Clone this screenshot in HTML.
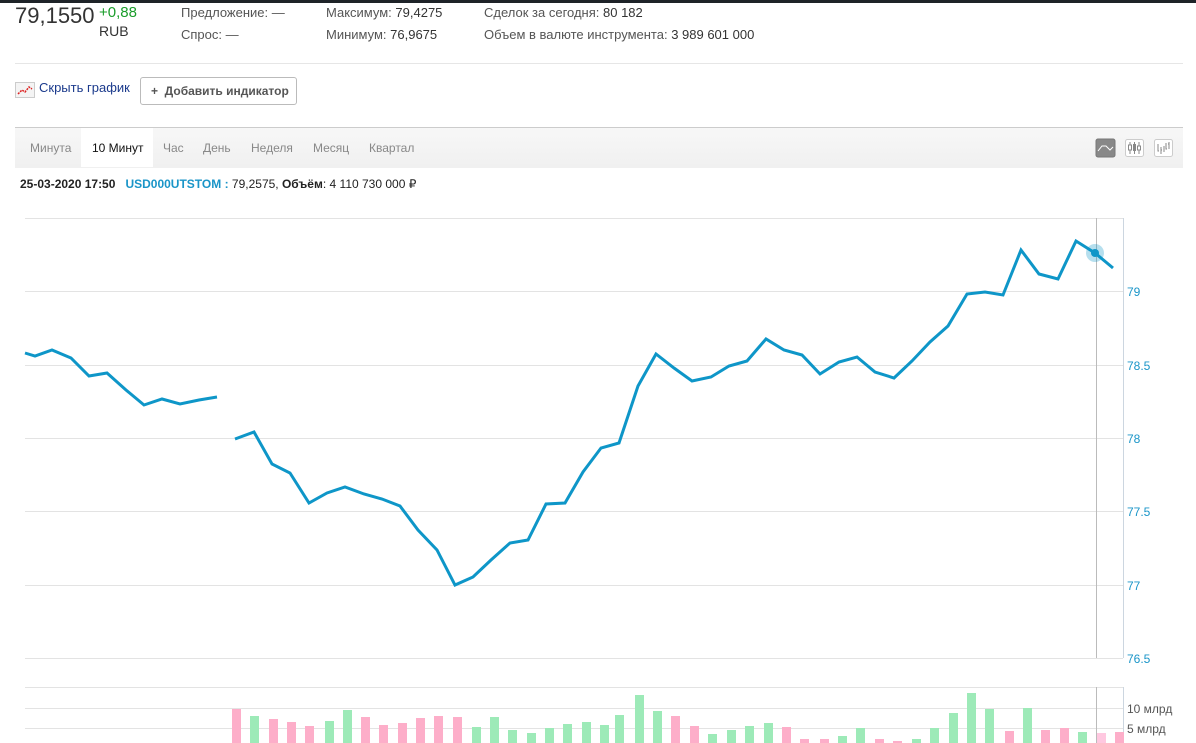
<!DOCTYPE html>
<html><head><meta charset="utf-8"><style>
body{margin:0;width:1196px;height:743px;overflow:hidden;background:#fff;font-family:"Liberation Sans",Arial,sans-serif;position:relative;color:#333}
.a{position:absolute;white-space:nowrap}
.g{color:#555;font-size:13px}
</style></head><body>
<div class="a" style="left:0;top:0;width:1196px;height:3px;background:#1e2328"></div>
<div class="a" style="left:15px;top:3px;font-size:22px;color:#333">79,1550</div>
<div class="a" style="left:99px;top:4px;font-size:15px;color:#1a9d2a">+0,88</div>
<div class="a" style="left:99px;top:23px;font-size:14px;color:#333">RUB</div>
<div class="a g" style="left:181px;top:5px">Предложение: —</div>
<div class="a g" style="left:181px;top:27px">Спрос: —</div>
<div class="a g" style="left:326px;top:5px">Максимум: <span style="color:#333">79,4275</span></div>
<div class="a g" style="left:326px;top:27px">Минимум: <span style="color:#333">76,9675</span></div>
<div class="a g" style="left:484px;top:5px">Сделок за сегодня: <span style="color:#333">80 182</span></div>
<div class="a g" style="left:484px;top:27px">Объем в валюте инструмента: <span style="color:#333">3 989 601 000</span></div>
<div class="a" style="left:15px;top:63px;width:1168px;height:1px;background:#e6e6e6"></div>
<div class="a" style="left:15px;top:82px;width:18px;height:14px;border:1px solid #ccc;background:#f4f4f4"><svg width="18" height="14"><polyline points="2,11 6,7 9,9 13,4 16,6" fill="none" stroke="#d22" stroke-width="1.5" stroke-dasharray="2 1"/></svg></div>
<div class="a" style="left:39px;top:80px;font-size:13px;color:#1b3a8c">Скрыть график</div>
<div class="a" style="left:140px;top:77px;width:157px;height:28px;border:1px solid #bbb;border-radius:3px;box-sizing:border-box;font-size:12px;font-weight:bold;color:#555;line-height:27px;padding-left:10px">+ &nbsp;Добавить индикатор</div>
<div class="a" style="left:15px;top:127px;width:1168px;height:40px;background:linear-gradient(#f7f7f7,#f0f0f0);border-top:1px solid #ccc"></div>
<div class="a" style="left:81px;top:128px;width:72px;height:39px;background:#fff"></div>
<div class="a" style="left:30px;top:141px;font-size:12px;color:#888">Минута</div>
<div class="a" style="left:92px;top:141px;font-size:12px;color:#111">10 Минут</div>
<div class="a" style="left:163px;top:141px;font-size:12px;color:#888">Час</div>
<div class="a" style="left:203px;top:141px;font-size:12px;color:#888">День</div>
<div class="a" style="left:251px;top:141px;font-size:12px;color:#888">Неделя</div>
<div class="a" style="left:313px;top:141px;font-size:12px;color:#888">Месяц</div>
<div class="a" style="left:369px;top:141px;font-size:12px;color:#888">Квартал</div>
<svg class="a" style="left:1095px;top:138px" width="90" height="22">
<rect x="1" y="1" width="19" height="18" rx="2" fill="#888" stroke="#777"/><polyline points="3,13 7,8 11,8 15,12 18,9" fill="none" stroke="#fff" stroke-width="1"/>
<rect x="30.5" y="1.5" width="18" height="17" rx="2" fill="#fff" stroke="#ccc"/><path d="M35 4v12M39.5 4v12M44 4v12" stroke="#888"/><rect x="33.5" y="7" width="3" height="5" fill="#fff" stroke="#888"/><rect x="38" y="6" width="3" height="7" fill="#888"/><rect x="42.5" y="8" width="3" height="4" fill="#fff" stroke="#888"/>
<rect x="59.5" y="1.5" width="18" height="17" rx="2" fill="#fff" stroke="#ccc"/><path d="M63 6v7h1M66 9v7M66 12h1M69 8v6M71 5v6h1M74 4v7M73 6h1" stroke="#888" fill="none"/>
</svg>
<div class="a" style="left:20px;top:177px;font-size:12px;color:#222"><b>25-03-2020 17:50</b> &nbsp; <b style="color:#1a95c8">USD000UTSTOM :</b> 79,2575, <b>Объём</b>: 4 110 730 000 ₽</div>
<svg class="a" style="left:0;top:0" width="1196" height="743">
<g stroke="#e3e3e3" stroke-width="1">
<line x1="25" y1="218.5" x2="1123" y2="218.5"/><line x1="25" y1="291.5" x2="1123" y2="291.5"/><line x1="25" y1="365.5" x2="1123" y2="365.5"/><line x1="25" y1="438.5" x2="1123" y2="438.5"/><line x1="25" y1="511.5" x2="1123" y2="511.5"/><line x1="25" y1="585.5" x2="1123" y2="585.5"/><line x1="25" y1="658.5" x2="1123" y2="658.5"/>
<line x1="25" y1="687.5" x2="1123" y2="687.5"/><line x1="25" y1="708.5" x2="1123" y2="708.5"/><line x1="25" y1="728.5" x2="1123" y2="728.5"/>
</g>
<line x1="1123.5" y1="218" x2="1123.5" y2="658" stroke="#ccd6e0"/><line x1="1123.5" y1="687" x2="1123.5" y2="743" stroke="#ccd6e0"/>
<g font-size="12" fill="#1a95c8" font-family="Liberation Sans,sans-serif"><text x="1127" y="296">79</text><text x="1127" y="370">78.5</text><text x="1127" y="443">78</text><text x="1127" y="516">77.5</text><text x="1127" y="590">77</text><text x="1127" y="663">76.5</text></g>
<g font-size="12" fill="#555" font-family="Liberation Sans,sans-serif"><text x="1127" y="713">10 млрд</text><text x="1127" y="733">5 млрд</text></g>
<g id="v"></g>
<line x1="1096.5" y1="218" x2="1096.5" y2="658" stroke="#bbb"/><line x1="1096.5" y1="687" x2="1096.5" y2="743" stroke="#bbb"/>
<polyline fill="none" stroke="#0e96c8" stroke-width="3" stroke-linejoin="miter" points="25,353 35,356 52,350 71,358 89,376 107,373 126,390 144,405 162,399 180,404 199,400 217,397"/>
<polyline fill="none" stroke="#0e96c8" stroke-width="3" points="235,439 254,432 272,464 290,473 309,503 327,493 345,487 364,494 382,499 400,506 418,530 437,550 455,585 473,577 491,560 510,543 528,540 546,504 565,503 583,472 601,448 619,443 638,386 656,354 674,368 692,381 711,377 729,366 747,361 766,339 784,350 802,355 820,374 839,362 857,357 875,372 894,378 912,361 930,342 948,326 967,294 985,292 1003,295 1021,250 1039,274 1058,279 1076,241 1095,253 1113,268"/>
<circle cx="1095" cy="253" r="9" fill="#0e96c8" opacity="0.3"/><circle cx="1095" cy="253" r="4" fill="#0e96c8"/>
</svg>
<script>
var P="#fdaec9",G="#9deab8",L="#ffc8e0";
var b=[[232,709,P],[250,716,G],[269,719,P],[287,722,P],[305,726,P],[325,721,G],[343,710,G],[361,717,P],[379,725,P],[398,723,P],[416,718,P],[434,716,P],[453,717,P],[472,727,G],[490,717,G],[508,730,G],[527,733,G],[545,728,G],[563,724,G],[582,722,G],[600,725,G],[615,715,G],[635,695,G],[653,711,G],[671,716,P],[690,726,P],[708,734,G],[727,730,G],[745,726,G],[764,723,G],[782,727,P],[800,739,P],[820,739,P],[838,736,G],[856,728,G],[875,739,P],[893,741,P],[912,739,G],[930,728,G],[949,713,G],[967,693,G],[985,709,G],[1005,731,P],[1023,708,G],[1041,730,P],[1060,728,P],[1078,732,G],[1097,733,L],[1115,732,P]];
var s="";b.forEach(function(e){s+='<rect x="'+e[0]+'" y="'+e[1]+'" width="9" height="'+(743-e[1])+'" fill="'+e[2]+'"/>'});
document.getElementById("v").innerHTML=s;
</script>
</body></html>
